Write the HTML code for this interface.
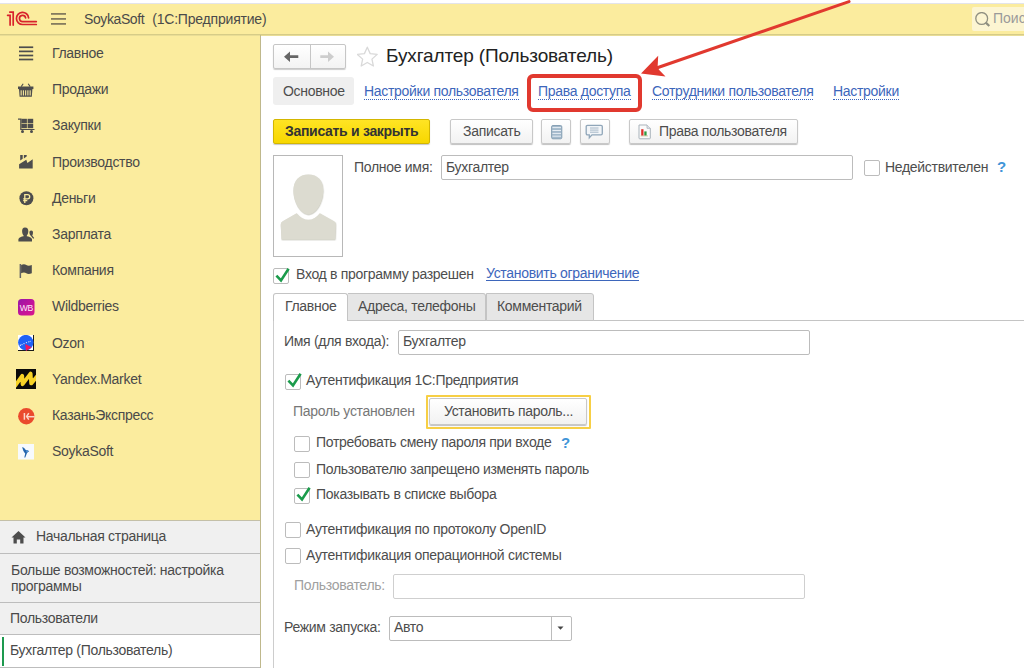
<!DOCTYPE html>
<html><head><meta charset="utf-8">
<style>
*{box-sizing:border-box;margin:0;padding:0}
html,body{width:1024px;height:668px;overflow:hidden;background:#fff;font-family:"Liberation Sans",sans-serif;font-size:14px;letter-spacing:-0.3px;color:#333}
.a{position:absolute;white-space:nowrap}
#top{position:absolute;left:0;top:0;width:1024px;height:4px;background:#fff;border-bottom:1px solid #e3e4ea}
#hdr{position:absolute;left:0;top:4px;width:1024px;height:31px;background:#fbec9e;border-bottom:1px solid #d6cc88;box-shadow:0 1px 0 #e9dd96;z-index:0}
#side{position:absolute;left:0;top:35px;width:261px;height:633px;background:#fbec9e;border-right:1px solid #bfb88c;box-shadow:inset 0 1px 0 #e9dd96}
.si{position:absolute;left:52px;color:#4a4a4a}
.ic{position:absolute;left:18px;width:17px;height:17px}
#bot{position:absolute;left:0;top:520px;width:261px;height:148px;background:#f0f0f0;border-right:1px solid #bfb88c}
.brow{position:absolute;left:0;width:260px;border-bottom:1px solid #bdbdbd}
.btn{position:absolute;height:25px;border:1px solid #c8c8c8;border-radius:2px;background:linear-gradient(#fff,#f2f2f2);box-shadow:0 1px 1px rgba(0,0,0,.25);color:#333}
.inp{position:absolute;height:24px;border:1px solid #bcbcbc;border-radius:2px;background:#fff}
.cb{position:absolute;width:15px;height:15px;border:1px solid #bcbcbc;border-radius:2px;background:#fff}
.lnk{position:absolute;color:#3d66bb;border-bottom:1px dotted #3d66bb;line-height:15px;white-space:nowrap}
.bt{line-height:15px;color:#4a4a4a}
.tx{line-height:15px;color:#4d4d4d}
.ttl{font-size:19px;line-height:20px;color:#222;letter-spacing:0}
</style></head><body>
<div id="top"></div>
<div id="hdr"></div>
<div id="side"></div>
<div id="bot"></div>
<svg class="a" style="left:5px;top:8px" width="35" height="22" viewBox="0 0 35 22"><g fill="none" stroke="#d8232c" stroke-width="1.7" stroke-linecap="round"><path d="M2.6 7.3 H5.1 V17.1"/><path d="M4.8 4.1 H8.2 V17.1"/><path d="M23.6 9.8 A6.1 6.1 0 1 0 17.6 16.5 H31.3"/><path d="M20.6 9.9 A3.1 3.1 0 1 0 17.6 13.6 H31.3"/></g></svg>
<svg class="a" style="left:51px;top:13px" width="15" height="12"><g fill="#857c5e"><rect x="0" y="0" width="15" height="1.8"/><rect x="0" y="5" width="15" height="1.8"/><rect x="0" y="10" width="15" height="1.8"/></g></svg>
<div class="a" style="left:84px;top:11.5px;line-height:15px;color:#4a4a4a;letter-spacing:-0.4px">SoykaSoft&nbsp;&nbsp;<span style="letter-spacing:-0.2px;margin-left:1px">(1C:Предприятие)</span></div>
<div class="a" style="left:972px;top:7px;width:60px;height:24px;background:#fcf5d2;border-radius:2px"></div>
<svg class="a" style="left:975px;top:12px" width="16" height="16"><circle cx="6.7" cy="6.5" r="5.9" fill="none" stroke="#8f8f80" stroke-width="1.3"/><path d="M10.8 10.6 L14.3 14" stroke="#8f8f80" stroke-width="2.2"/></svg>
<div class="a" style="left:993px;top:11px;line-height:15px;color:#9a9a9a;letter-spacing:0px">Поиск</div>
<svg class="a" style="left:19px;top:46px" width="15" height="15"><g fill="#4d4d4d"><rect x="0" y="0.4" width="14.2" height="1.7"/><rect x="0" y="4.55" width="14.2" height="1.7"/><rect x="0" y="8.65" width="14.2" height="1.7"/><rect x="0" y="12.65" width="14.2" height="1.7"/></g></svg>
<svg class="a" style="left:18px;top:82px" width="16" height="16"><g fill="#4d4d4d"><path d="M3.2 4.6 L5.2 1.8 M12.2 4.6 L10.2 1.8" stroke="#4d4d4d" stroke-width="1.1" fill="none"/><rect x="0" y="4.5" width="15.4" height="2.6"/><path d="M1 7 H14.4 L13.8 14.8 H1.6 Z"/></g><g fill="#fbec9e"><rect x="2.60" y="8.3" width="1.1" height="5.2"/><rect x="4.85" y="8.3" width="1.1" height="5.2"/><rect x="7.10" y="8.3" width="1.1" height="5.2"/><rect x="9.35" y="8.3" width="1.1" height="5.2"/><rect x="11.60" y="8.3" width="1.1" height="5.2"/></g></svg>
<svg class="a" style="left:17px;top:117px" width="18" height="17"><g fill="#4d4d4d"><path d="M1 2.2 H3.8 V12.5 H17.5" stroke="#4d4d4d" stroke-width="1.2" fill="none"/><rect x="4.3" y="1.8" width="5.6" height="4.4"/><rect x="10.6" y="1.8" width="5.6" height="4.4"/><rect x="4.3" y="6.8" width="5.6" height="4.4"/><rect x="10.6" y="6.8" width="5.6" height="4.4"/><circle cx="5.5" cy="14.4" r="1.5"/><circle cx="14.5" cy="14.4" r="1.5"/></g></svg>
<svg class="a" style="left:18px;top:154px" width="16" height="16"><g fill="#4d4d4d"><path d="M1.1 14.6 V10.3 L8.3 5.8 L9.4 9 L14.7 5.2 V14.6 Z"/><path d="M2.2 1 H4.7 V4.8 L2.2 6.6 Z"/><path d="M5.9 1 H8.4 Q8.9 1 8.8 1.8 L8.6 2.6 L5.9 4.4 Z"/></g></svg>
<svg class="a" style="left:19px;top:191px" width="15" height="15"><circle cx="7.4" cy="7.3" r="7" fill="#4d4d4d"/><path d="M5.8 12 V3.6 H8.6 A2.1 2.1 0 0 1 8.6 7.8 H4.2 M4.2 9.6 H8.3" stroke="#fbec9e" stroke-width="1.3" fill="none"/></svg>
<svg class="a" style="left:18px;top:227px" width="17" height="15"><g fill="#4d4d4d"><path d="M7 0.4 C4.9 0.4 4.1 2 4.1 4 C4.1 6 4.8 7.6 5.6 8.4 V9.2 C3.5 9.6 0.8 10.3 0.4 12.2 V14.4 H14 V12.2 C13.6 10.3 10.9 9.6 8.8 9.2 V8.4 C9.6 7.6 10.3 6 10.3 4 C10.3 2 9.5 0.4 7 0.4Z"/><path d="M13.2 3.5 C12 3.5 11.4 4.4 11.4 5.6 C11.4 7 12.1 8.3 12.8 8.8 L15.2 11.8 L16.2 11 L14.2 8.5 C14.8 7.8 15 6.8 15 5.6 C15 4.4 14.4 3.5 13.2 3.5Z"/></g></svg>
<svg class="a" style="left:19px;top:263px" width="14" height="16"><rect x="0.6" y="1" width="1.5" height="14" fill="#666"/><path d="M2.1 2 C4 1 6 1 7.3 2 C8.8 3 10.5 3 12.8 2 V10.3 C10.5 11.3 8.8 11.3 7.3 10.3 C6 9.3 4 9.3 2.1 10.3Z" fill="#4d4d4d"/></svg>
<svg class="a" style="left:18px;top:299px" width="17" height="17"><defs><linearGradient id="wb" x1="0" y1="0" x2="1" y2="1"><stop offset="0" stop-color="#9418a8"/><stop offset="0.5" stop-color="#c0149c"/><stop offset="1" stop-color="#d8168c"/></linearGradient></defs><rect x="0" y="0" width="16.5" height="16.5" rx="3.5" fill="url(#wb)"/><text x="8.3" y="11.5" font-family="Liberation Sans" font-size="8.6" fill="#fbeefa" text-anchor="middle" letter-spacing="-0.4">WB</text></svg>
<svg class="a" style="left:18px;top:335px" width="16" height="16"><rect x="0" y="0" width="16" height="16" fill="#fff"/><rect x="15" y="0" width="1" height="16" fill="#1a1a1a"/><rect x="0" y="15" width="16" height="1" fill="#1a1a1a"/><circle cx="7.8" cy="7.6" r="7.7" fill="#1f62f6"/><path d="M7.2 9 L13.6 12.3 L8 16 Z" fill="#f5145a"/><g fill="#e8f0ff"><circle cx="2.3" cy="10.2" r="0.7"/><circle cx="4" cy="9.6" r="0.6"/><circle cx="6" cy="8.6" r="0.6"/><circle cx="8.4" cy="7.6" r="0.6"/><circle cx="10.8" cy="6.8" r="0.6"/><circle cx="12.2" cy="6.2" r="0.5"/></g></svg>
<svg class="a" style="left:16px;top:369px" width="20" height="20"><defs><clipPath id="ymc"><rect x="0" y="0" width="20" height="20"/></clipPath></defs><rect x="0" y="0" width="20" height="20" fill="#0a0a0a"/><path clip-path="url(#ymc)" d="M-1 17 L6.2 6.8 L6.6 15.2 L14.6 4.6 L15.2 14.4 L21 7.5" fill="none" stroke="#f7d327" stroke-width="3.9" stroke-linejoin="round" stroke-linecap="round"/></svg>
<svg class="a" style="left:18px;top:408px" width="17" height="17"><circle cx="8.3" cy="8.3" r="8.2" fill="#ea4a2d"/><g stroke="#fbd6c8" stroke-width="1.5" fill="none"><path d="M6.4 5 V11.7"/><path d="M10.8 5.2 L8.6 8.5 L10.8 11.7"/><path d="M9 8.7 H16.8"/></g></svg>
<svg class="a" style="left:18px;top:444px" width="17" height="16"><rect x="0" y="0" width="16" height="15.5" fill="#f7fafd"/><path d="M4.2 3 C5.6 3.3 6.8 4.6 7.8 6 C8.8 5.8 10 6.2 11.2 7.3 C10 7.8 9.2 8.5 8.8 9.4 C8.3 10.8 7.8 12.2 7.3 13.6 L6.3 13.4 C6.7 12 7 10.6 7.2 9.5 C5.8 8 4.6 5.5 4.2 3Z" fill="#2465ad"/><path d="M8 6.3 C9 6.2 10 6.5 10.8 7.3 C9.8 7.6 9.2 8 8.7 8.6Z" fill="#5b9ad8"/></svg>
<div class="si a" style="top:46px;line-height:15px">Главное</div>
<div class="si a" style="top:82px;line-height:15px">Продажи</div>
<div class="si a" style="top:118px;line-height:15px">Закупки</div>
<div class="si a" style="top:155px;line-height:15px">Производство</div>
<div class="si a" style="top:191px;line-height:15px">Деньги</div>
<div class="si a" style="top:227px;line-height:15px">Зарплата</div>
<div class="si a" style="top:263px;line-height:15px">Компания</div>
<div class="si a" style="top:299px;line-height:15px">Wildberries</div>
<div class="si a" style="top:336px;line-height:15px">Ozon</div>
<div class="si a" style="top:372px;line-height:15px">Yandex.Market</div>
<div class="si a" style="top:408px;line-height:15px">КазаньЭкспресс</div>
<div class="si a" style="top:444px;line-height:15px">SoykaSoft</div>
<div class="a" style="left:0;top:520px;width:260px;height:1px;background:#c4c0a8"></div>
<div class="a" style="left:0;top:553px;width:260px;height:1px;background:#bdbdbd"></div>
<div class="a" style="left:0;top:602px;width:260px;height:1px;background:#bdbdbd"></div>
<div class="a" style="left:0;top:634px;width:260px;height:1px;background:#bdbdbd"></div>
<div class="a" style="left:0;top:635px;width:260px;height:32px;background:#fff"></div>
<div class="a" style="left:0;top:667px;width:260px;height:1px;background:#bdbdbd"></div>
<div class="a" style="left:2px;top:637px;width:2px;height:29px;background:#1d9a4f"></div>
<svg class="a" style="left:11px;top:530px" width="15" height="14"><path d="M7.5 1 L14.5 7.5 H12.5 V13.5 H9.2 V9.5 H5.8 V13.5 H2.5 V7.5 H0.5 Z" fill="#4d4d4d"/></svg>
<div class="bt a" style="left:36px;top:529px">Начальная страница</div>
<div class="bt a" style="left:11px;top:561.5px;line-height:16px;white-space:normal;width:245px">Больше возможностей: настройка программы</div>
<div class="bt a" style="left:10px;top:611px">Пользователи</div>
<div class="bt a" style="left:10px;top:643px">Бухгалтер (Пользователь)</div>
<!-- MAIN -->
<div class="a" style="left:273px;top:44px;width:73px;height:25px;border:1px solid #c6c6c6;border-radius:2px;background:linear-gradient(#fff,#f3f3f3);box-shadow:0 1px 1px rgba(0,0,0,.2)"></div>
<div class="a" style="left:310px;top:45px;width:1px;height:23px;background:#c6c6c6"></div>
<svg class="a" style="left:283px;top:50px" width="18" height="13"><path d="M1 6.8 L7 1.6 V5.3 H15.3 V8.1 H7 V11.9 Z" fill="#666"/></svg>
<svg class="a" style="left:318px;top:50px" width="18" height="13"><path d="M16 6.8 L10 1.6 V5.3 H2.3 V8.1 H10 V11.9 Z" fill="#cdcdcd"/></svg>
<svg class="a" style="left:357px;top:46px" width="21" height="22"><path d="M10.30 1.20 L13.18 7.64 L20.19 8.39 L14.96 13.11 L16.41 20.01 L10.30 16.50 L4.19 20.01 L5.64 13.11 L0.41 8.39 L7.42 7.64 Z" fill="none" stroke="#d9d9d9" stroke-width="1.3" stroke-linejoin="round"/></svg>
<div class="a ttl" style="left:386px;top:46px;letter-spacing:-0.13px">Бухгалтер (Пользователь)</div>
<div class="a" style="left:273px;top:77px;width:81px;height:28px;background:#efefef;border-radius:3px"></div>
<div class="a tx" style="left:283px;top:84px">Основное</div>
<div class="lnk" style="left:364px;top:84px">Настройки пользователя</div>
<div class="lnk" style="left:538px;top:84px">Права доступа</div>
<div class="lnk" style="left:652px;top:84px">Сотрудники пользователя</div>
<div class="lnk" style="left:833px;top:84px">Настройки</div>
<!-- toolbar -->
<div class="a" style="left:273px;top:119px;width:157px;height:25px;border:1px solid #d3b600;border-radius:2px;background:linear-gradient(#ffe424,#f7d700);box-shadow:0 1px 1px rgba(0,0,0,.22)"></div>
<div class="a tx" style="left:285px;top:124px;font-weight:bold;color:#333">Записать и закрыть</div>
<div class="btn" style="left:450px;top:119px;width:83px;height:25px"></div>
<div class="a tx" style="left:463px;top:124px">Записать</div>
<div class="btn" style="left:541px;top:119px;width:30px;height:25px"></div>
<svg class="a" style="left:551px;top:125px" width="12" height="15"><rect x="0.6" y="0.5" width="10.2" height="13.3" rx="1.3" fill="#a3b9cb" stroke="#87a0b4" stroke-width="1"/><g stroke="#eef3f8" stroke-width="0.9"><path d="M1.4 2.6 H10 M1.4 5.5 H10 M1.4 8.4 H10 M1.4 11.2 H10"/></g></svg>
<div class="btn" style="left:580px;top:119px;width:30px;height:25px"></div>
<svg class="a" style="left:585px;top:124px" width="19" height="16"><path d="M2.5 1.3 H16 Q17.3 1.3 17.3 2.6 V9.6 Q17.3 10.9 16 10.9 H7 L4.3 13.8 V10.9 H2.5 Q1.2 10.9 1.2 9.6 V2.6 Q1.2 1.3 2.5 1.3 Z" fill="#f2f5f8" stroke="#90a6b9" stroke-width="1.3"/><path d="M5 4 H13.5 M5 6.1 H13.5 M5 8.2 H13.5" stroke="#9db1c2" stroke-width="0.9"/></svg>
<div class="btn" style="left:629px;top:119px;width:169px;height:25px"></div>
<svg class="a" style="left:637px;top:124px" width="15" height="16"><path d="M2 1 H10 L13.3 4.3 V14 Q13.3 14.8 12.5 14.8 H2.8 Q2 14.8 2 14 Z" fill="#fafafa" stroke="#a9b3bb" stroke-width="1"/><path d="M10 1 V4.3 H13.3" fill="#e3e8ec" stroke="#a9b3bb" stroke-width="0.8"/><rect x="4.2" y="5.2" width="2.3" height="6.5" fill="#e0302a"/><rect x="7.3" y="7.4" width="2.3" height="4.3" fill="#2e9a3e"/><path d="M3.6 11.9 H11" stroke="#c9b58a" stroke-width="0.7"/></svg>
<div class="a tx" style="left:659px;top:124px">Права пользователя</div>
<!-- form -->
<div class="a" style="left:273px;top:155px;width:70px;height:102px;border:1px solid #b8b8b8;background:#fff"></div>
<svg class="a" style="left:279px;top:172px" width="60" height="72"><defs><filter id="sh" x="-10%" y="-10%" width="120%" height="120%"><feDropShadow dx="0.3" dy="0.6" stdDeviation="0.5" flood-color="#a8a898" flood-opacity="0.7"/></filter></defs><g fill="#dcdbd0" filter="url(#sh)"><path d="M29.3 2.5 C38.5 2.5 44.3 8.5 44.3 18.5 C44.3 30.5 37 42.4 29.3 42.4 C21.6 42.4 14.4 30.5 14.4 18.5 C14.4 8.5 20.1 2.5 29.3 2.5 Z"/><path d="M2.5 67.6 L1.7 52.4 Q1.7 50.2 3.6 49.2 L17.6 41.2 Q23 47.8 29.3 47.8 Q35.6 47.8 40.8 41.2 L55 49.2 Q57 50.2 57 52.4 L56.3 67.6 Z"/></g></svg>
<div class="a tx" style="left:354px;top:160px">Полное имя:</div>
<div class="inp" style="left:441px;top:155px;width:412px;height:25px"></div>
<div class="a tx" style="left:446px;top:160px">Бухгалтер</div>
<div class="cb" style="left:864px;top:160px;width:16px;height:16px"></div>
<div class="a tx" style="left:885px;top:160px">Недействителен</div>
<div class="a" style="left:997px;top:159px;font-size:15px;font-weight:bold;color:#3f95d8;line-height:16px">?</div>
<div class="cb" style="left:273px;top:268px;width:16px;height:16px"></div>
<svg class="a" style="left:274px;top:265px" width="16" height="18"><path d="M2.4 10.6 L7 15.4 L14.6 3.8" fill="none" stroke="#1a9b4b" stroke-width="2.6"/></svg>
<div class="a tx" style="left:296px;top:267px">Вход в программу разрешен</div>
<div class="lnk" style="left:486px;top:267px;border-bottom:1px solid #3d66bb;line-height:13px">Установить ограничение</div>
<!-- tabs -->
<div class="a" style="left:273px;top:320px;width:751px;height:1px;background:#c4c4c4"></div>
<div class="a" style="left:273px;top:320px;width:1px;height:348px;background:#cdcdcd"></div>
<div class="a" style="left:273px;top:293px;width:75px;height:28px;border:1px solid #c4c4c4;border-bottom:none;border-radius:3px 3px 0 0;background:#fff"></div>
<div class="a" style="left:348px;top:293px;width:138px;height:28px;border:1px solid #c4c4c4;border-left:none;border-radius:0 3px 0 0;background:#e6e6e6"></div>
<div class="a" style="left:486px;top:293px;width:108px;height:28px;border:1px solid #c4c4c4;border-radius:0 3px 0 0;background:#e6e6e6"></div>
<div class="a tx" style="left:285px;top:299px">Главное</div>
<div class="a tx" style="left:358px;top:299px">Адреса, телефоны</div>
<div class="a tx" style="left:497px;top:299px">Комментарий</div>
<div class="a tx" style="left:284px;top:334px">Имя (для входа):</div>
<div class="inp" style="left:398px;top:330px;width:412px;height:25px"></div>
<div class="a tx" style="left:403px;top:334px">Бухгалтер</div>
<!-- auth -->
<div class="cb" style="left:285px;top:374px;width:16px;height:16px"></div><svg class="a" style="left:286px;top:370px" width="16" height="18"><path d="M2.4 10.6 L7 15.4 L14.6 3.8" fill="none" stroke="#1a9b4b" stroke-width="2.6"/></svg><div class="a tx" style="left:306px;top:373px">Аутентификация 1С:Предприятия</div>
<div class="a tx" style="left:293px;top:404px;color:#777">Пароль установлен</div>
<div class="a" style="left:426px;top:395px;width:165px;height:34px;border:2px solid #f7cf45;border-radius:1px"></div>
<div class="btn" style="left:429px;top:398px;width:158px;height:27px"></div>
<div class="a tx" style="left:444px;top:404px">Установить пароль...</div>
<div class="cb" style="left:294px;top:436px;width:16px;height:16px"></div><div class="a tx" style="left:316px;top:435px">Потребовать смену пароля при входе</div>
<div class="a" style="left:561px;top:435px;font-size:15px;font-weight:bold;color:#3f95d8;line-height:16px">?</div>
<div class="cb" style="left:294px;top:462px;width:16px;height:16px"></div><div class="a tx" style="left:316px;top:462px">Пользователю запрещено изменять пароль</div>
<div class="cb" style="left:294px;top:488px;width:16px;height:16px"></div><svg class="a" style="left:295px;top:484px" width="16" height="18"><path d="M2.4 10.6 L7 15.4 L14.6 3.8" fill="none" stroke="#1a9b4b" stroke-width="2.6"/></svg><div class="a tx" style="left:316px;top:487px">Показывать в списке выбора</div>
<div class="cb" style="left:285px;top:522px;width:16px;height:16px"></div><div class="a tx" style="left:306px;top:522px">Аутентификация по протоколу OpenID</div>
<div class="cb" style="left:285px;top:548px;width:16px;height:16px"></div><div class="a tx" style="left:306px;top:548px">Аутентификация операционной системы</div>
<div class="a tx" style="left:294px;top:578px;color:#a0a0a0">Пользователь:</div>
<div class="inp" style="left:393px;top:574px;width:412px;height:25px;border-color:#cfcfcf"></div>
<div class="a tx" style="left:284px;top:620px">Режим запуска:</div>
<div class="inp" style="left:389px;top:616px;width:183px;height:25px"></div>
<div class="a" style="left:551px;top:617px;width:1px;height:23px;background:#bcbcbc"></div>
<svg class="a" style="left:557px;top:626px" width="8" height="5"><path d="M0.5 0.5 H6.5 L3.5 3.8Z" fill="#444"/></svg>
<div class="a tx" style="left:394px;top:620px">Авто</div>
<!-- annotation -->
<div class="a" style="left:527px;top:74px;width:115px;height:38px;border:4px solid #e1392f;border-radius:6px"></div>
<svg class="a" style="left:0;top:0" width="1024" height="668" viewBox="0 0 1024 668"><path d="M658 67.5 L849 1.6" stroke="#e1392f" stroke-width="3.1" stroke-linecap="round" fill="none"/><path d="M641 73.4 L658.2 55.8 L657.6 67.6 L659.2 70 L665.5 76.6 Z" fill="#e1392f"/></svg>
</body></html>
